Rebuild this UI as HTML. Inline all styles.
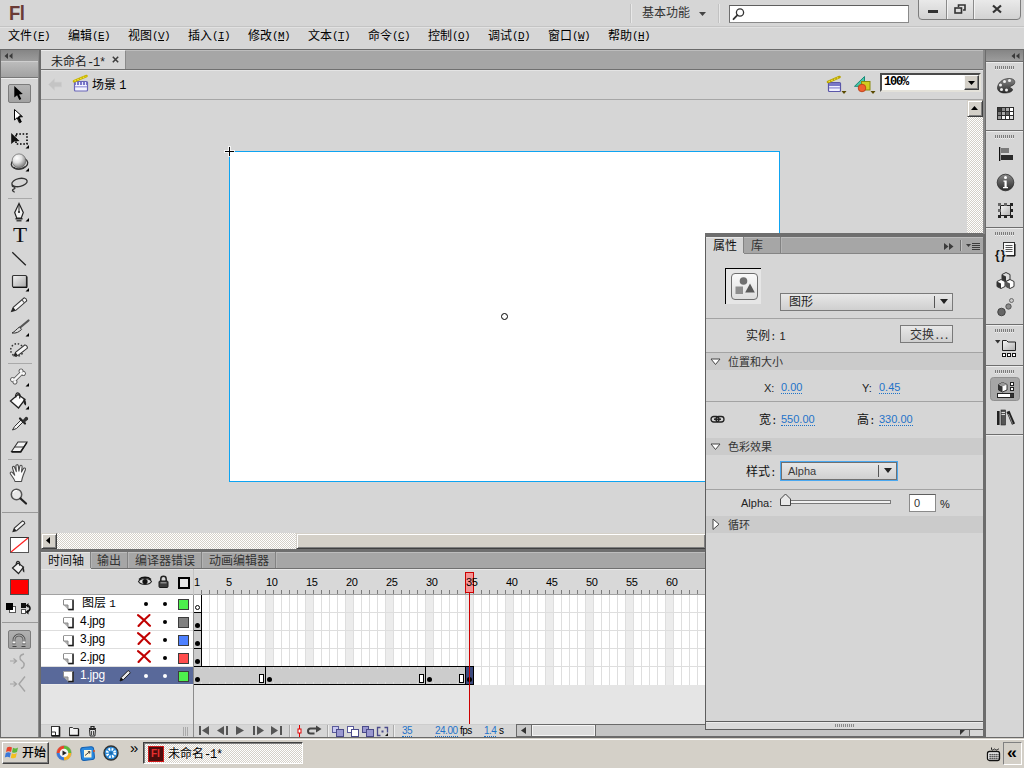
<!DOCTYPE html>
<html lang="zh-CN">
<head>
<meta charset="utf-8">
<title>未命名-1*</title>
<style>
html,body{margin:0;padding:0;}
body{width:1024px;height:768px;overflow:hidden;position:relative;background:#d6d6d6;
 font-family:"Liberation Sans","Noto Sans CJK SC",sans-serif;font-size:12px;color:#000;line-height:14px;}
.a{position:absolute;}
.t{position:absolute;white-space:nowrap;line-height:14px;height:14px;}
.t i,.mi i{font-style:normal;font-family:"Liberation Mono","Noto Sans Mono CJK SC",monospace;letter-spacing:-0.6px;font-size:11px;}
.u{text-decoration:underline;}
.mi i{position:relative;top:-1px;}
svg{position:absolute;overflow:visible;}
.mi{position:absolute;top:29px;height:14px;line-height:14px;white-space:nowrap;}
.tabbar{background:#a6a6a6;border-top:1px solid #bdbdbd;box-sizing:border-box;}
.tah{font-family:"Liberation Sans","DejaVu Sans",sans-serif;font-size:11px;}
.tl{font-family:"Liberation Sans","DejaVu Sans",sans-serif;font-size:10px;letter-spacing:-0.500px;}
.blue{color:#1f73c9;border-bottom:1px dotted #1f73c9;line-height:12px;height:12px;}
.sec{position:absolute;left:706px;width:277px;height:17px;background:#cbcbcb;}
.hline{position:absolute;left:706px;width:277px;height:1px;background:#a3a3a3;}
.btn{position:absolute;box-sizing:border-box;border:1px solid #7a7a7a;background:linear-gradient(#e8e8e8,#cfcfcf);}
</style>
</head>
<body>

<!-- top -->
<div class="a" style="left:0;top:0;width:1024px;height:26px;background:#d6d6d6"></div>
<div class="a" style="left:0;top:26px;width:1024px;height:1px;background:#c4c4c4"></div>
<div class="a" style="left:0;top:27px;width:1024px;height:1px;background:#e2e2e2;z-index:1"></div>
<div class="a" style="left:0;top:27px;width:1024px;height:22px;background:#d6d6d6"></div>
<div class="t" style="left:9px;top:1px;font-family:'Liberation Sans',sans-serif;font-weight:bold;font-size:21px;line-height:24px;height:24px;color:#6a3a36;letter-spacing:-0.5px;transform:scaleX(.88);transform-origin:0 0">Fl</div>
<div class="mi" style="left:8px">文件<i>(<span class="u">F</span>)</i></div>
<div class="mi" style="left:68px">编辑<i>(<span class="u">E</span>)</i></div>
<div class="mi" style="left:128px">视图<i>(<span class="u">V</span>)</i></div>
<div class="mi" style="left:188px">插入<i>(<span class="u">I</span>)</i></div>
<div class="mi" style="left:248px">修改<i>(<span class="u">M</span>)</i></div>
<div class="mi" style="left:308px">文本<i>(<span class="u">T</span>)</i></div>
<div class="mi" style="left:368px">命令<i>(<span class="u">C</span>)</i></div>
<div class="mi" style="left:428px">控制<i>(<span class="u">O</span>)</i></div>
<div class="mi" style="left:488px">调试<i>(<span class="u">D</span>)</i></div>
<div class="mi" style="left:548px">窗口<i>(<span class="u">W</span>)</i></div>
<div class="mi" style="left:608px">帮助<i>(<span class="u">H</span>)</i></div>
<!-- workspace switcher -->
<div class="a" style="left:630px;top:4px;width:1px;height:19px;background:#c2c2c2"></div>
<div class="a" style="left:631px;top:4px;width:1px;height:19px;background:#e8e8e8"></div>
<div class="t" style="left:642px;top:6px;color:#333">基本功能</div>
<svg style="left:699px;top:12px" width="7" height="4"><path d="M0 0h7l-3.5 4z" fill="#444"/></svg>
<div class="a" style="left:718px;top:4px;width:1px;height:19px;background:#c2c2c2"></div>
<div class="a" style="left:719px;top:4px;width:1px;height:19px;background:#e8e8e8"></div>
<!-- search -->
<div class="a" style="left:729px;top:5px;width:180px;height:18px;box-sizing:border-box;background:#fff;border:1px solid #8a8a8a;border-top-color:#5e5e5e;border-left-color:#6e6e6e"></div>
<svg style="left:732px;top:7px" width="14" height="14" viewBox="0 0 14 14"><circle cx="8" cy="5.5" r="3.6" fill="none" stroke="#333" stroke-width="1.3"/><path d="M5.4 8.2L1.5 12.2" stroke="#333" stroke-width="1.8" stroke-linecap="round"/></svg>
<!-- window buttons -->
<div class="a" style="left:918px;top:-3px;width:103px;height:23px;box-sizing:border-box;border:1px solid #7d7d7d;border-radius:0 0 4px 4px;background:linear-gradient(#ececec,#d2d2d2)"></div>
<div class="a" style="left:946px;top:0;width:1px;height:19px;background:#8a8a8a"></div>
<div class="a" style="left:947px;top:0;width:1px;height:19px;background:#f2f2f2"></div>
<div class="a" style="left:973px;top:0;width:1px;height:19px;background:#8a8a8a"></div>
<div class="a" style="left:974px;top:0;width:1px;height:19px;background:#f2f2f2"></div>
<div class="a" style="left:928px;top:10px;width:10px;height:3px;background:#333"></div>
<svg style="left:954px;top:4px" width="12" height="10" viewBox="0 0 12 10"><path d="M4.5 3V1h6.5v5H9" fill="none" stroke="#333" stroke-width="1.6"/><rect x="1" y="4" width="6.5" height="5" fill="none" stroke="#333" stroke-width="1.6"/></svg>
<svg style="left:992px;top:5px" width="10" height="8" viewBox="0 0 10 8"><path d="M1 0.5L9 7.5M9 0.5L1 7.5" stroke="#333" stroke-width="2.2"/></svg>

<!-- doc -->
<!-- dark line under menubar -->
<div class="a" style="left:0;top:49px;width:1024px;height:1px;background:#6a6a6a"></div>
<!-- document tab bar -->
<div class="a tabbar" style="left:41px;top:50px;width:942px;height:19px"></div>
<div class="a" style="left:41px;top:69px;width:942px;height:1px;background:#707070"></div>
<div class="a" style="left:41px;top:50px;width:85px;height:19px;background:#d6d6d6;border-top:1px solid #ececec;box-sizing:border-box;border-right:1px solid #8a8a8a"></div>
<div class="t" style="left:51px;top:55px;color:#222">未命名<i style="font-size:12px;letter-spacing:-1.200px">-1*</i></div>
<svg style="left:112px;top:56px" width="7" height="7" viewBox="0 0 7 7"><path d="M0.8 0.8L6.2 6.2M6.2 0.8L0.8 6.2" stroke="#3c3c3c" stroke-width="1.5"/></svg>
<!-- edit bar -->
<div class="a" style="left:41px;top:70px;width:942px;height:29px;background:#d6d6d6;border-top:1px solid #e4e4e4;box-sizing:border-box"></div>
<div class="a" style="left:41px;top:99px;width:942px;height:1px;background:#a6a6a6"></div>
<svg style="left:48px;top:78px" width="14" height="13" viewBox="0 0 14 13"><path d="M0.5 6.5L6.5 0.8V4.2H13.5V8.8H6.5V12.2z" fill="#c4c4c4" stroke="#cdcdcd" stroke-width=".6"/></svg>
<!-- scene clapper -->
<svg style="left:73px;top:75px" width="16" height="17" viewBox="0 0 16 17">
 <rect x="1.5" y="6.5" width="13" height="9.5" rx="1" fill="#f4f4ff" stroke="#6a66b8" stroke-width="1.2"/>
 <rect x="2" y="7" width="12" height="3" fill="#7a78c8"/>
 <path d="M3.5 7v3M6.5 7v3M9.5 7v3M12.5 7v3" stroke="#e8e8ff" stroke-width="1"/>
 <rect x="2" y="11" width="12" height="1.5" fill="#a8a6e0"/>
 <path d="M1 6.2L13.5 1" stroke="#c8b400" stroke-width="2.6" stroke-linecap="round"/>
 <path d="M1.5 6L13.2 1.2" stroke="#f0e040" stroke-width="1.2" stroke-dasharray="1.6 1.4"/>
</svg>
<div class="t" style="left:92px;top:78px">场景 <i style="font-size:12px">1</i></div>
<!-- edit scene / edit symbols icons -->
<svg style="left:827px;top:75px" width="20" height="20" viewBox="0 0 20 20">
 <rect x="1.5" y="7.5" width="12" height="9" rx="1" fill="#f0f0ff" stroke="#5a56a8" stroke-width="1.2"/>
 <rect x="2" y="8" width="11" height="3" fill="#7a78c8"/>
 <rect x="2" y="12.2" width="11" height="1.4" fill="#9a98d8"/>
 <path d="M1 7L12.5 2" stroke="#b8a400" stroke-width="2.6" stroke-linecap="round"/>
 <path d="M1.5 6.8L12.2 2.2" stroke="#f0e040" stroke-width="1.2" stroke-dasharray="1.6 1.4"/>
 <path d="M14.5 16h5l-2.5 3z" fill="#5a4a00"/>
</svg>
<svg style="left:853px;top:75px" width="24" height="20" viewBox="0 0 24 20">
 <path d="M1.500 11.300L11.500 1.500V11.300z" fill="#48c8a8" stroke="#1a8a7a" stroke-width="1"/>
 <rect x="8.500" y="6.500" width="8.500" height="8.500" fill="#d0cc20" stroke="#8a8a10" stroke-width="1"/>
 <circle cx="9" cy="13" r="3.800" fill="#f06030" stroke="#b83810" stroke-width=".800"/>
 <path d="M17.5 16h5l-2.5 3z" fill="#5a4a00"/>
</svg>
<!-- zoom combo -->
<div class="a" style="left:880px;top:73px;width:101px;height:19px;box-sizing:border-box;background:#fff;border:2px solid;border-color:#4a4a4a #e4e2da #e4e2da #4a4a4a;box-shadow:inset 0 0 0 0 #000"></div>
<div class="t" style="left:884px;top:75px;font-family:'Liberation Mono',monospace;font-weight:bold;font-size:12px;letter-spacing:-1.2px">100%</div>
<div class="a" style="left:964px;top:75px;width:15px;height:15px;box-sizing:border-box;background:#d4d0c8;border:1px solid;border-color:#f8f8f8 #404040 #404040 #f8f8f8;box-shadow:inset -1px -1px 0 #808080"></div>
<svg style="left:968px;top:81px" width="7" height="4"><path d="M0 0h7l-3.5 4z" fill="#000"/></svg>
<!-- stage -->
<div class="a" style="left:229px;top:151px;width:551px;height:331px;box-sizing:border-box;background:#fff;border:1px solid #0ea4f2"></div>
<div class="a" style="left:224px;top:150px;width:11px;height:3px;background:rgba(255,255,255,.75)"></div>
<div class="a" style="left:228px;top:146px;width:3px;height:11px;background:rgba(255,255,255,.75)"></div>
<div class="a" style="left:225px;top:151px;width:9px;height:1px;background:#000"></div>
<div class="a" style="left:229px;top:147px;width:1px;height:9px;background:#000"></div>
<svg style="left:500px;top:312px" width="9" height="9" viewBox="0 0 9 9"><circle cx="4.5" cy="4.5" r="3" fill="#fff" stroke="#000" stroke-width="1"/></svg>
<!-- vertical scrollbar -->
<div class="a" style="left:967px;top:100px;width:16px;height:134px;background-color:#d4d0c8;background-image:conic-gradient(#fff 25%,#d4d0c8 0 50%,#fff 0 75%,#d4d0c8 0);background-size:2px 2px"></div>
<div class="a" style="left:967px;top:100px;width:16px;height:17px;box-sizing:border-box;background:#d4d0c8;border:1px solid;border-color:#d4d0c8 #404040 #404040 #d4d0c8;box-shadow:inset 1px 1px 0 #fff,inset -1px -1px 0 #808080"></div>
<svg style="left:971px;top:106px" width="7" height="4"><path d="M0 4h7l-3.5-4z" fill="#000"/></svg>
<!-- horizontal scrollbar -->
<div class="a" style="left:41px;top:533px;width:665px;height:16px;background-color:#d4d0c8;background-image:conic-gradient(#fff 25%,#d4d0c8 0 50%,#fff 0 75%,#d4d0c8 0);background-size:2px 2px"></div>
<div class="a" style="left:41px;top:533px;width:16px;height:16px;box-sizing:border-box;background:#d4d0c8;border:1px solid;border-color:#d4d0c8 #404040 #404040 #d4d0c8;box-shadow:inset 1px 1px 0 #fff,inset -1px -1px 0 #808080"></div>
<svg style="left:46px;top:537px" width="4" height="7"><path d="M4 0v7l-4-3.500z" fill="#000"/></svg>
<div class="a" style="left:296px;top:533px;width:410px;height:16px;box-sizing:border-box;background:#d4d0c8;border:1px solid;border-color:#d4d0c8 #404040 #404040 #d4d0c8;box-shadow:inset 1px 1px 0 #fff,inset -1px -1px 0 #808080"></div>

<!-- timeline -->
<div class="a" style="left:41px;top:549px;width:665px;height:3px;background:#6e6e6e"></div>
<div class="a tabbar" style="left:41px;top:552px;width:665px;height:16px"></div>
<div class="a" style="left:41px;top:568px;width:665px;height:1px;background:#707070"></div>
<div class="a" style="left:41px;top:552px;width:50px;height:17px;background:#d6d6d6;border-top:1px solid #e8e8e8;box-sizing:border-box"></div>
<div class="a" style="left:90px;top:552px;width:1px;height:16px;background:#828282"></div>
<div class="a" style="left:91px;top:553px;width:1px;height:15px;background:#b4b4b4"></div>
<div class="a" style="left:127px;top:552px;width:1px;height:16px;background:#828282"></div>
<div class="a" style="left:128px;top:553px;width:1px;height:15px;background:#b4b4b4"></div>
<div class="a" style="left:201px;top:552px;width:1px;height:16px;background:#828282"></div>
<div class="a" style="left:202px;top:553px;width:1px;height:15px;background:#b4b4b4"></div>
<div class="a" style="left:275px;top:552px;width:1px;height:16px;background:#828282"></div>
<div class="a" style="left:276px;top:553px;width:1px;height:15px;background:#b4b4b4"></div>
<div class="t" style="left:48px;top:554px;color:#111">时间轴</div>
<div class="t" style="left:97px;top:554px;color:#333">输出</div>
<div class="t" style="left:135px;top:554px;color:#333">编译器错误</div>
<div class="t" style="left:209px;top:554px;color:#333">动画编辑器</div>
<div class="a" style="left:41px;top:569px;width:665px;height:25px;background:#d8d8d8;border-top:1px solid #e8e8e8;box-sizing:border-box"></div>
<div class="a" style="left:41px;top:594px;width:665px;height:1px;background:#a2a2a2"></div>
<div class="a" style="left:194px;top:590px;width:512px;height:4px;background:repeating-linear-gradient(90deg,transparent 0 7px,#7d7d7d 7px 8px)"></div>
<div class="a" style="left:465px;top:572px;width:9px;height:21px;box-sizing:border-box;border:1px solid #cc0000;background:rgba(255,120,120,.72)"></div>
<div class="t tah" style="left:194px;top:575px;color:#000;letter-spacing:-0.300px">1</div>
<div class="t tah" style="left:226px;top:575px;color:#000;letter-spacing:-0.300px">5</div>
<div class="t tah" style="left:266px;top:575px;color:#000;letter-spacing:-0.300px">10</div>
<div class="t tah" style="left:306px;top:575px;color:#000;letter-spacing:-0.300px">15</div>
<div class="t tah" style="left:346px;top:575px;color:#000;letter-spacing:-0.300px">20</div>
<div class="t tah" style="left:386px;top:575px;color:#000;letter-spacing:-0.300px">25</div>
<div class="t tah" style="left:426px;top:575px;color:#000;letter-spacing:-0.300px">30</div>
<div class="t tah" style="left:466px;top:575px;color:#000;letter-spacing:-0.300px">35</div>
<div class="t tah" style="left:506px;top:575px;color:#000;letter-spacing:-0.300px">40</div>
<div class="t tah" style="left:546px;top:575px;color:#000;letter-spacing:-0.300px">45</div>
<div class="t tah" style="left:586px;top:575px;color:#000;letter-spacing:-0.300px">50</div>
<div class="t tah" style="left:626px;top:575px;color:#000;letter-spacing:-0.300px">55</div>
<div class="t tah" style="left:666px;top:575px;color:#000;letter-spacing:-0.300px">60</div>
<div class="a" style="left:41px;top:595px;width:152px;height:72px;background:#fff"></div>
<div class="a" style="left:194px;top:595px;width:512px;height:90px;background:#fff"></div>
<div class="a" style="left:226px;top:595px;width:8px;height:90px;background:#ececec"></div>
<div class="a" style="left:266px;top:595px;width:8px;height:90px;background:#ececec"></div>
<div class="a" style="left:306px;top:595px;width:8px;height:90px;background:#ececec"></div>
<div class="a" style="left:346px;top:595px;width:8px;height:90px;background:#ececec"></div>
<div class="a" style="left:386px;top:595px;width:8px;height:90px;background:#ececec"></div>
<div class="a" style="left:426px;top:595px;width:8px;height:90px;background:#ececec"></div>
<div class="a" style="left:466px;top:595px;width:8px;height:90px;background:#ececec"></div>
<div class="a" style="left:506px;top:595px;width:8px;height:90px;background:#ececec"></div>
<div class="a" style="left:546px;top:595px;width:8px;height:90px;background:#ececec"></div>
<div class="a" style="left:586px;top:595px;width:8px;height:90px;background:#ececec"></div>
<div class="a" style="left:626px;top:595px;width:8px;height:90px;background:#ececec"></div>
<div class="a" style="left:666px;top:595px;width:8px;height:90px;background:#ececec"></div>
<div class="a" style="left:194px;top:595px;width:512px;height:90px;background:repeating-linear-gradient(90deg,transparent 0 7px,#dedede 7px 8px)"></div>
<div class="a" style="left:41px;top:612px;width:665px;height:1px;background:#dedede"></div>
<div class="a" style="left:41px;top:630px;width:665px;height:1px;background:#dedede"></div>
<div class="a" style="left:41px;top:648px;width:665px;height:1px;background:#dedede"></div>
<div class="a" style="left:41px;top:666px;width:665px;height:1px;background:#dedede"></div>
<div class="a" style="left:41px;top:685px;width:665px;height:39px;background:#e5e5e5"></div>
<div class="a" style="left:41px;top:684px;width:152px;height:1px;background:#ececec"></div>
<div class="a" style="left:41px;top:724px;width:665px;height:13px;background:#d6d6d6;border-top:1px solid #cdcdcd;box-sizing:border-box"></div>
<div class="a" style="left:193px;top:569px;width:1px;height:26px;background:#c4c4c4"></div>
<div class="a" style="left:193px;top:595px;width:1px;height:142px;background:#8c8c8c"></div>
<div class="a" style="left:41px;top:667px;width:152px;height:17px;background:#59699a"></div>
<svg style="left:63px;top:599px" width="12" height="12" viewBox="0 0 12 12"><path d="M1.500 2h9.500v9.500h-5v-4.500h-4.500z" fill="#9a9a9a" opacity=".6"/><path d="M0.500 0.500h9.500v10h-5v-4.500h-4.500z" fill="#fff"/><path d="M0.500 6l4.500 0 0 4.500z" fill="#b0b0b0"/><path d="M10 0.500v10h-5" fill="none" stroke="#1a1a1a" stroke-width="1.500"/><path d="M0.500 0.500h9" stroke="#a0a0a0" stroke-width="1"/><path d="M0.500 1v5h4.500v4.500" fill="none" stroke="#8a8a8a" stroke-width="1"/></svg>
<div class="t" style="left:82px;top:596px">图层 <i>1</i></div>
<div class="a" style="left:144px;top:602px;width:4px;height:4px;border-radius:50%;background:#000"></div>
<div class="a" style="left:163px;top:602px;width:4px;height:4px;border-radius:50%;background:#000"></div>
<div class="a" style="left:178px;top:599px;width:11px;height:11px;box-sizing:border-box;background:#4df04d;border:1px solid #3c3c3c"></div>
<svg style="left:63px;top:617px" width="12" height="12" viewBox="0 0 12 12"><path d="M1.500 2h9.500v9.500h-5v-4.500h-4.500z" fill="#9a9a9a" opacity=".6"/><path d="M0.500 0.500h9.500v10h-5v-4.500h-4.500z" fill="#fff"/><path d="M0.500 6l4.500 0 0 4.500z" fill="#b0b0b0"/><path d="M10 0.500v10h-5" fill="none" stroke="#1a1a1a" stroke-width="1.500"/><path d="M0.500 0.500h9" stroke="#a0a0a0" stroke-width="1"/><path d="M0.500 1v5h4.500v4.500" fill="none" stroke="#8a8a8a" stroke-width="1"/></svg>
<div class="t tah" style="left:80px;top:614px;color:#000;font-size:12px;letter-spacing:-0.200px">4.jpg</div>
<svg style="left:137px;top:614px" width="14" height="13" viewBox="0 0 14 13"><path d="M1 1.200C5 4 9 8 13 11.800M12.500 1C9 4 5 8 1.500 12" fill="none" stroke="#c00000" stroke-width="2.1" stroke-linecap="round"/></svg>
<div class="a" style="left:163px;top:620px;width:4px;height:4px;border-radius:50%;background:#000"></div>
<div class="a" style="left:178px;top:617px;width:11px;height:11px;box-sizing:border-box;background:#808080;border:1px solid #3c3c3c"></div>
<svg style="left:63px;top:635px" width="12" height="12" viewBox="0 0 12 12"><path d="M1.500 2h9.500v9.500h-5v-4.500h-4.500z" fill="#9a9a9a" opacity=".6"/><path d="M0.500 0.500h9.500v10h-5v-4.500h-4.500z" fill="#fff"/><path d="M0.500 6l4.500 0 0 4.500z" fill="#b0b0b0"/><path d="M10 0.500v10h-5" fill="none" stroke="#1a1a1a" stroke-width="1.500"/><path d="M0.500 0.500h9" stroke="#a0a0a0" stroke-width="1"/><path d="M0.500 1v5h4.500v4.500" fill="none" stroke="#8a8a8a" stroke-width="1"/></svg>
<div class="t tah" style="left:80px;top:632px;color:#000;font-size:12px;letter-spacing:-0.200px">3.jpg</div>
<svg style="left:137px;top:632px" width="14" height="13" viewBox="0 0 14 13"><path d="M1 1.200C5 4 9 8 13 11.800M12.500 1C9 4 5 8 1.500 12" fill="none" stroke="#c00000" stroke-width="2.1" stroke-linecap="round"/></svg>
<div class="a" style="left:163px;top:638px;width:4px;height:4px;border-radius:50%;background:#000"></div>
<div class="a" style="left:178px;top:635px;width:11px;height:11px;box-sizing:border-box;background:#4d80ff;border:1px solid #3c3c3c"></div>
<svg style="left:63px;top:653px" width="12" height="12" viewBox="0 0 12 12"><path d="M1.500 2h9.500v9.500h-5v-4.500h-4.500z" fill="#9a9a9a" opacity=".6"/><path d="M0.500 0.500h9.500v10h-5v-4.500h-4.500z" fill="#fff"/><path d="M0.500 6l4.500 0 0 4.500z" fill="#b0b0b0"/><path d="M10 0.500v10h-5" fill="none" stroke="#1a1a1a" stroke-width="1.500"/><path d="M0.500 0.500h9" stroke="#a0a0a0" stroke-width="1"/><path d="M0.500 1v5h4.500v4.500" fill="none" stroke="#8a8a8a" stroke-width="1"/></svg>
<div class="t tah" style="left:80px;top:650px;color:#000;font-size:12px;letter-spacing:-0.200px">2.jpg</div>
<svg style="left:137px;top:650px" width="14" height="13" viewBox="0 0 14 13"><path d="M1 1.200C5 4 9 8 13 11.800M12.500 1C9 4 5 8 1.500 12" fill="none" stroke="#c00000" stroke-width="2.1" stroke-linecap="round"/></svg>
<div class="a" style="left:163px;top:656px;width:4px;height:4px;border-radius:50%;background:#000"></div>
<div class="a" style="left:178px;top:653px;width:11px;height:11px;box-sizing:border-box;background:#ff4d4d;border:1px solid #3c3c3c"></div>
<svg style="left:63px;top:671px" width="12" height="12" viewBox="0 0 12 12"><path d="M1.500 2h9.500v9.500h-5v-4.500h-4.500z" fill="#9a9a9a" opacity=".6"/><path d="M0.500 0.500h9.500v10h-5v-4.500h-4.500z" fill="#fff"/><path d="M0.500 6l4.500 0 0 4.500z" fill="#b0b0b0"/><path d="M10 0.500v10h-5" fill="none" stroke="#1a1a1a" stroke-width="1.500"/><path d="M0.500 0.500h9" stroke="#a0a0a0" stroke-width="1"/><path d="M0.500 1v5h4.500v4.500" fill="none" stroke="#8a8a8a" stroke-width="1"/></svg>
<div class="t tah" style="left:80px;top:668px;color:#fff;font-size:12px;letter-spacing:-0.200px">1.jpg</div>
<div class="a" style="left:144px;top:674px;width:4px;height:4px;border-radius:50%;background:#fff"></div>
<div class="a" style="left:163px;top:674px;width:4px;height:4px;border-radius:50%;background:#fff"></div>
<div class="a" style="left:178px;top:671px;width:11px;height:11px;box-sizing:border-box;background:#4df04d;border:1px solid #3c3c3c"></div>
<svg style="left:119px;top:669px" width="12" height="13" viewBox="0 0 12 13"><path d="M1 12l1.200-3.500 7-7 2.200 2.200-7 7z" fill="#e8e8e8" stroke="#1a1a1a" stroke-width="1"/><path d="M1 12l1.200-3.500 2.200 2.200z" fill="#111"/></svg>
<svg style="left:138px;top:576px" width="14" height="11" viewBox="0 0 14 11"><path d="M0.500 5.500C3 1.500 11 1.500 13.500 5.500C11 9.500 3 9.500 0.500 5.500z" fill="#e0e0e0" stroke="#222" stroke-width="1.100"/><circle cx="7" cy="5.500" r="2.600" fill="#111"/><path d="M1 3.500C4 0.500 10 0.500 13 3.500" fill="none" stroke="#111" stroke-width="1.400"/></svg>
<svg style="left:158px;top:575px" width="11" height="13" viewBox="0 0 11 13"><path d="M2.800 6V4a2.700 2.700 0 0 1 5.400 0V6" fill="none" stroke="#222" stroke-width="1.500"/><rect x="1" y="6" width="9" height="6.500" rx="1" fill="#3c3c3c" stroke="#1a1a1a" stroke-width="1"/><rect x="2.500" y="7" width="6" height="1.500" fill="#8a8a8a"/></svg>
<div class="a" style="left:178px;top:577px;width:12px;height:12px;box-sizing:border-box;border:2px solid #000;background:#e6e6e6"></div>
<div class="a" style="left:194px;top:595px;width:7px;height:17px;background:#fff"></div>
<div class="a" style="left:195px;top:605px;width:5px;height:5px;box-sizing:border-box;border-radius:50%;border:1px solid #000;background:#fff"></div>
<div class="a" style="left:194px;top:612px;width:8px;height:1px;background:#000"></div>
<div class="a" style="left:194px;top:613px;width:7px;height:17px;background:#cccccc"></div>
<div class="a" style="left:195px;top:623px;width:5px;height:5px;border-radius:50%;background:#000"></div>
<div class="a" style="left:194px;top:630px;width:8px;height:1px;background:#000"></div>
<div class="a" style="left:194px;top:631px;width:7px;height:17px;background:#cccccc"></div>
<div class="a" style="left:195px;top:641px;width:5px;height:5px;border-radius:50%;background:#000"></div>
<div class="a" style="left:194px;top:648px;width:8px;height:1px;background:#000"></div>
<div class="a" style="left:194px;top:649px;width:7px;height:17px;background:#cccccc"></div>
<div class="a" style="left:195px;top:659px;width:5px;height:5px;border-radius:50%;background:#000"></div>
<div class="a" style="left:194px;top:666px;width:8px;height:1px;background:#000"></div>
<div class="a" style="left:201px;top:595px;width:1px;height:72px;background:#000"></div>
<div class="a" style="left:194px;top:666px;width:280px;height:19px;box-sizing:border-box;background:#cccccc;border-top:1px solid #000;border-bottom:1px solid #000"></div>
<div class="a" style="left:194px;top:667px;width:272px;height:2px;background:repeating-linear-gradient(90deg,transparent 0 7px,#dcdcdc 7px 8px)"></div>
<div class="a" style="left:194px;top:682px;width:272px;height:2px;background:repeating-linear-gradient(90deg,transparent 0 7px,#dcdcdc 7px 8px)"></div>
<div class="a" style="left:265px;top:666px;width:1px;height:19px;background:#000"></div>
<div class="a" style="left:259px;top:674px;width:5px;height:9px;box-sizing:border-box;border:1px solid #000;background:#fff"></div>
<div class="a" style="left:425px;top:666px;width:1px;height:19px;background:#000"></div>
<div class="a" style="left:419px;top:674px;width:5px;height:9px;box-sizing:border-box;border:1px solid #000;background:#fff"></div>
<div class="a" style="left:465px;top:666px;width:1px;height:19px;background:#000"></div>
<div class="a" style="left:459px;top:674px;width:5px;height:9px;box-sizing:border-box;border:1px solid #000;background:#fff"></div>
<div class="a" style="left:466px;top:666px;width:8px;height:19px;box-sizing:border-box;background:#3c4a7e;border:1px solid #000;border-left:none"></div>
<div class="a" style="left:195px;top:677px;width:5px;height:5px;border-radius:50%;background:#000"></div>
<div class="a" style="left:267px;top:677px;width:5px;height:5px;border-radius:50%;background:#000"></div>
<div class="a" style="left:427px;top:677px;width:5px;height:5px;border-radius:50%;background:#000"></div>
<div class="a" style="left:467px;top:677px;width:5px;height:5px;border-radius:50%;background:#000"></div>
<div class="a" style="left:469px;top:593px;width:1px;height:131px;background:#cc0000"></div>
<svg style="left:41px;top:724px" width="665" height="14" viewBox="41 724 665 14"><rect x="51.500" y="726.500" width="8" height="9" fill="#fff" stroke="#333" stroke-width="1"/><path d="M52 732h3.500v3.500" fill="none" stroke="#333" stroke-width="1"/><path d="M59.500 727v9h-8" stroke="#111" stroke-width="1.600" fill="none"/><path d="M69.500 727.500h3l1 1h5v7h-9z" fill="#f0f0f0" stroke="#333" stroke-width="1"/><path d="M78.500 729v6.500h-9" stroke="#111" stroke-width="1.300" fill="none"/><path d="M89 728.500h7M91 728v-1.500h3v1.500" stroke="#222" stroke-width="1.200" fill="none"/><path d="M89.500 729.500h6l-.6 6.500h-4.800z" fill="#ddd" stroke="#222" stroke-width="1"/><path d="M91.500 731v4M93.500 731v4" stroke="#222" stroke-width=".8"/><path d="M183.500 727v9M185.500 727v9M187.500 727v9" stroke="#aaa" stroke-width="1"/><rect x="199" y="726" width="2" height="9" fill="#555"/><path d="M209 726v9l-7-4.500z" fill="#555"/><path d="M224 726v9l-7-4.500z" fill="#555"/><rect x="226" y="726" width="2" height="9" fill="#555"/><path d="M236 726v9l8-4.500z" fill="#555"/><rect x="253" y="726" width="2" height="9" fill="#555"/><path d="M257 726v9l7-4.500z" fill="#555"/><path d="M271 726v9l7-4.500z" fill="#555"/><rect x="280" y="726" width="2" height="9" fill="#555"/><path d="M289.500 725v12" stroke="#aaa"/><path d="M290.500 725v12" stroke="#eee"/><path d="M299.500 725v12" stroke="#e00000" stroke-width="1"/><rect x="298" y="729" width="3" height="4" fill="#fff" stroke="#e00000" stroke-width="1"/><path d="M317 728.500h-6.500a2.500 2.500 0 0 0 0 5h4" fill="none" stroke="#444" stroke-width="2"/><path d="M316 725.500l5.500 3.500-5.500 3.500z" fill="#444"/><path d="M327.500 725v12" stroke="#aaa"/><path d="M328.500 725v12" stroke="#eee"/><rect x="332.500" y="726.500" width="6" height="6" fill="#c8c8f0" stroke="#5a5a9a"/><rect x="336.500" y="729.500" width="7" height="7" fill="#9a98d0" stroke="#4a4a8a"/><rect x="347.500" y="726.500" width="6" height="6" fill="#fff" stroke="#5a5a9a"/><rect x="351.500" y="729.500" width="7" height="7" fill="#fff" stroke="#4a4a8a"/><rect x="362.500" y="726.500" width="6" height="6" fill="#9a98d0" stroke="#4a4a8a"/><rect x="366.500" y="729.500" width="7" height="7" fill="#9a98d0" stroke="#4a4a8a"/><path d="M380.500 727.500h-3v8h3M384.500 727.500h3v5" fill="none" stroke="#4a4a8a" stroke-width="1.300"/><rect x="381.500" y="730.500" width="2" height="2" fill="#4a4a8a"/><path d="M388 733v3h-3z" fill="#111"/><path d="M393.500 725v12" stroke="#aaa"/><path d="M394.500 725v12" stroke="#eee"/></svg>
<div class="t tl blue" style="left:402px;top:726px;line-height:10px;height:10px">35</div>
<div class="t tl blue" style="left:435px;top:726px;line-height:10px;height:10px">24.00</div>
<div class="t tl" style="left:460px;top:726px;line-height:10px;height:10px">fps</div>
<div class="t tl blue" style="left:484px;top:726px;line-height:10px;height:10px">1.4</div>
<div class="t tl" style="left:499px;top:726px;line-height:10px;height:10px">s</div>
<div class="a" style="left:516px;top:724px;width:467px;height:13px;background:#c4c4c4;border:1px solid #6a6a6a;border-right:none;box-sizing:border-box"></div>
<div class="a" style="left:517px;top:725px;width:14px;height:11px;background:#c8c8c8"></div>
<div class="a" style="left:531px;top:725px;width:1px;height:11px;background:#6a6a6a"></div>
<svg style="left:521px;top:727px" width="5" height="7"><path d="M5 0v7l-5-3.500z" fill="#333"/></svg>
<div class="a" style="left:532px;top:725px;width:63px;height:11px;box-sizing:border-box;background:#dcdcdc;border:1px solid #f4f4f4"></div>
<div class="a" style="left:595px;top:725px;width:1px;height:11px;background:#6a6a6a"></div>
<div class="a" style="left:969px;top:730px;width:14px;height:6px;box-sizing:border-box;background:#d6d6d6;border-left:1px solid #6a6a6a"></div>
<svg style="left:960px;top:730px" width="6" height="5"><path d="M0 5L5 0H0z" fill="#333"/></svg>
<!-- props -->
<!-- properties panel frame -->
<div class="a" style="left:705px;top:233px;width:280px;height:497px;background:#5e5e5e"></div>
<div class="a" style="left:983px;top:233px;width:2px;height:505px;background:#5e5e5e"></div>
<div class="a" style="left:705px;top:233px;width:280px;height:4px;background:#6e6e6e"></div>
<div class="a" style="left:706px;top:237px;width:277px;height:484px;background:#d6d6d6"></div>
<div class="a tabbar" style="left:706px;top:237px;width:277px;height:16px"></div>
<div class="a" style="left:706px;top:253px;width:277px;height:1px;background:#858585"></div>
<div class="a" style="left:706px;top:237px;width:38px;height:17px;background:#d6d6d6;border-top:1px solid #e8e8e8;box-sizing:border-box"></div>
<div class="a" style="left:743px;top:237px;width:1px;height:16px;background:#828282"></div>
<div class="a" style="left:780px;top:237px;width:1px;height:16px;background:#828282"></div>
<div class="a" style="left:781px;top:238px;width:1px;height:15px;background:#b4b4b4"></div>
<div class="t" style="left:713px;top:239px;color:#111">属性</div>
<div class="t" style="left:751px;top:239px;color:#333">库</div>
<svg style="left:944px;top:240px" width="40" height="12" viewBox="944 240 40 12"><path d="M944 243v7l4.500-3.500zM949 243v7l4.500-3.500z" fill="#3c3c3c"/><path d="M960.500 240v11" stroke="#6e6e6e"/><path d="M961.500 240v11" stroke="#c0c0c0"/><path d="M966 244h5l-2.500 3z" fill="#3c3c3c"/><path d="M972 243.500h8M972 245.500h8M972 247.500h8M972 249.500h8" stroke="#3c3c3c" stroke-width="1"/></svg>
<!-- symbol icon -->
<div class="a" style="left:725px;top:268px;width:36px;height:36px;box-sizing:border-box;background:#e6e6e6;border-top:1px solid #000;border-left:1px solid #000"></div>
<div class="a" style="left:731px;top:273px;width:27px;height:27px;box-sizing:border-box;border:1.500px solid #6e6e6e;border-radius:4px;background:linear-gradient(#fafafa,#dedede)"></div>
<svg style="left:731px;top:273px" width="27" height="27" viewBox="0 0 27 27"><circle cx="12.500" cy="8" r="3.800" fill="#707070"/><rect x="4.500" y="13.500" width="7.500" height="7.500" fill="#8e8e8e"/><path d="M19 10.500l4.800 9h-9.600z" fill="#5a5a5a"/></svg>
<!-- type combo -->
<div class="btn" style="left:780px;top:293px;width:173px;height:18px"></div>
<div class="t" style="left:789px;top:295px;color:#222">图形</div>
<div class="a" style="left:934px;top:296px;width:1px;height:12px;background:#555"></div>
<svg style="left:940px;top:299px" width="8" height="5"><path d="M0 0h8l-4 5z" fill="#222"/></svg>
<div class="hline" style="top:318px"></div>
<div class="t" style="left:746px;top:329px;color:#222">实例<i>:</i> <span class="tah" style="font-size:11px">1</span></div>
<div class="btn" style="left:900px;top:325px;width:53px;height:18px"></div>
<div class="t" style="left:910px;top:328px;color:#333">交换<i style="letter-spacing:-2px">...</i></div>
<div class="hline" style="top:352px"></div>
<!-- position and size -->
<div class="sec" style="top:353px"></div>
<svg style="left:710px;top:358px" width="11" height="8" viewBox="0 0 11 8"><path d="M1 1h9l-4.500 5.500z" fill="#fff" stroke="#444" stroke-width="1"/></svg>
<div class="t" style="left:728px;top:355px;color:#333;font-size:11px">位置和大小</div>
<div class="t tah" style="left:764px;top:381px;color:#222">X:</div>
<div class="t tah blue" style="left:781px;top:381px">0.00</div>
<div class="t tah" style="left:862px;top:381px;color:#222">Y:</div>
<div class="t tah blue" style="left:879px;top:381px">0.45</div>
<div class="hline" style="top:401px"></div>
<svg style="left:710px;top:415px" width="15" height="9" viewBox="0 0 15 9"><rect x="1" y="1.500" width="8" height="5.500" rx="2.700" fill="none" stroke="#222" stroke-width="1.300"/><rect x="6" y="1.500" width="8" height="5.500" rx="2.700" fill="none" stroke="#222" stroke-width="1.300"/><path d="M4 4.200h7" stroke="#222" stroke-width="1.500"/></svg>
<div class="t" style="left:759px;top:413px;color:#111">宽<i>:</i></div>
<div class="t tah blue" style="left:781px;top:413px">550.00</div>
<div class="t" style="left:857px;top:413px;color:#111">高<i>:</i></div>
<div class="t tah blue" style="left:879px;top:413px">330.00</div>
<!-- color effect -->
<div class="sec" style="top:438px"></div>
<svg style="left:710px;top:443px" width="11" height="8" viewBox="0 0 11 8"><path d="M1 1h9l-4.500 5.500z" fill="#fff" stroke="#444" stroke-width="1"/></svg>
<div class="t" style="left:728px;top:440px;color:#333;font-size:11px">色彩效果</div>
<div class="t" style="left:746px;top:465px;color:#111">样式<i>:</i></div>
<div class="btn" style="left:780px;top:461px;width:118px;height:20px;border:1px solid #4aa8f0;box-shadow:inset 0 0 0 1px #707070"></div>
<div class="t tah" style="left:788px;top:464px;color:#3a3a3a">Alpha</div>
<div class="a" style="left:878px;top:465px;width:1px;height:12px;background:#555"></div>
<svg style="left:884px;top:468px" width="8" height="5"><path d="M0 0h8l-4 5z" fill="#222"/></svg>
<div class="hline" style="top:489px"></div>
<div class="t tah" style="left:741px;top:496px;color:#222">Alpha:</div>
<div class="a" style="left:786px;top:500px;width:105px;height:4px;box-sizing:border-box;border:1px solid #7a7a7a;background:#f0f0f0"></div>
<svg style="left:779px;top:493px" width="13" height="14" viewBox="0 0 13 14"><path d="M1.500 12.500v-6.500l5-5 5 5v6.500z" fill="#e8e8e8" stroke="#444" stroke-width="1"/></svg>
<div class="a" style="left:909px;top:494px;width:27px;height:18px;box-sizing:border-box;background:#fff;border:1px solid #8a8a8a;border-top-color:#5e5e5e"></div>
<div class="t tah" style="left:914px;top:496px;color:#333">0</div>
<div class="t tah" style="left:940px;top:497px;color:#222">%</div>
<!-- loop -->
<div class="sec" style="top:516px"></div>
<svg style="left:712px;top:518px" width="8" height="13" viewBox="0 0 8 13"><path d="M1 1v10.500l6-5.250z" fill="#fff" stroke="#444" stroke-width="1"/></svg>
<div class="t" style="left:728px;top:518px;color:#333;font-size:11px">循环</div>
<!-- bottom of panel -->
<div class="a" style="left:706px;top:722px;width:277px;height:7px;background:#dadada;border-top:1px solid #ececec;box-sizing:border-box"></div>
<div class="a" style="left:835px;top:724px;width:20px;height:3px;background:repeating-linear-gradient(90deg,#8a8a8a 0 1px,transparent 1px 2px)"></div>

<!-- tools -->
<!-- tools panel -->
<div class="a" style="left:0;top:50px;width:41px;height:688px;background:#6c6c6c"></div>
<div class="a" style="left:38px;top:50px;width:1px;height:688px;background:#8a8a8a"></div>
<div class="a" style="left:1px;top:50px;width:37px;height:11px;background:linear-gradient(#858585,#9c9c9c)"></div>
<div class="a" style="left:1px;top:61px;width:37px;height:17px;background:linear-gradient(#bcbcbc,#a0a0a0);border-top:1px solid #cfcfcf;box-sizing:border-box"></div>
<div class="a" style="left:1px;top:77px;width:37px;height:1px;background:#787878"></div>
<div class="a" style="left:1px;top:78px;width:37px;height:659px;background:#d6d6d6;border-top:1px solid #ececec;box-sizing:border-box"></div>
<svg style="left:4px;top:53px" width="9" height="6" viewBox="0 0 9 6"><path d="M4 0v6l-3.500-3zM8.500 0v6l-3.500-3z" fill="#3a3a3a"/></svg>
<!-- separators -->
<div class="a" style="left:8px;top:198px;width:24px;height:1px;background:#a9a9a9"></div>
<div class="a" style="left:8px;top:363px;width:24px;height:1px;background:#a9a9a9"></div>
<div class="a" style="left:8px;top:459px;width:24px;height:1px;background:#a9a9a9"></div>
<div class="a" style="left:2px;top:512px;width:36px;height:1px;background:#9a9a9a"></div>
<div class="a" style="left:2px;top:622px;width:36px;height:1px;background:#9a9a9a"></div>
<!-- selected tool buttons -->
<div class="a" style="left:8px;top:84px;width:23px;height:19px;box-sizing:border-box;border:1px solid #7c7c7c;border-radius:2px;background:linear-gradient(#b4b4b4,#a2a2a2)"></div>
<div class="a" style="left:8px;top:630px;width:23px;height:19px;box-sizing:border-box;border:1px solid #7c7c7c;border-radius:2px;background:linear-gradient(#b0b0b0,#a0a0a0)"></div>
<svg style="left:0;top:78px" width="40" height="660" viewBox="0 78 40 660">
<defs>
 <radialGradient id="gsph" cx=".35" cy=".3" r=".75"><stop offset="0" stop-color="#fff"/><stop offset=".45" stop-color="#e0e0e0"/><stop offset="1" stop-color="#777"/></radialGradient>
 <linearGradient id="grect" x1="0" y1="0" x2="1" y2="1"><stop offset="0" stop-color="#f4f4f4"/><stop offset="1" stop-color="#a8a8a8"/></linearGradient>
</defs>
<!-- selection arrow -->
<path d="M14.300 86v11.500l2.800-2.300 2.200 4.800 2-.9-2.200-4.700 3.700-.3z" fill="#000"/>
<!-- subselection arrow -->
<path d="M14.500 109.500v10.500l2.600-2.200 2.300 5 1.900-.9-2.300-4.900 3.500-.3z" fill="#fff" stroke="#000" stroke-width="1" stroke-linejoin="miter"/>
<path d="M17.300 117.600l2.300 5 1.700-.8-2.300-4.900 3-.3-1.800-1.700z" fill="#000"/>
<!-- free transform -->
<rect x="16" y="134" width="11" height="10" fill="none" stroke="#000" stroke-width="1.600" stroke-dasharray="1.600 1.700"/>
<path d="M11.200 133v11l3-2.600 5.300-.4z" fill="#111"/>
<path d="M29 145v3.500h-3.500z" fill="#000"/>
<!-- 3d rotation -->
<ellipse cx="19.500" cy="163.500" rx="8.300" ry="5.500" fill="none" stroke="#333" stroke-width="1.300" transform="rotate(-8 19.500 163.500)"/>
<circle cx="19" cy="160.800" r="6.900" fill="url(#gsph)" stroke="#666" stroke-width=".700"/>
<path d="M13.500 167.300c2.500 2.600 8.500 2.600 11.500-.5" fill="none" stroke="#333" stroke-width="1.300"/>
<path d="M29 168v3.500h-3.500z" fill="#000"/>
<!-- lasso -->
<ellipse cx="19.500" cy="182.500" rx="7.800" ry="4" fill="none" stroke="#333" stroke-width="1.300" transform="rotate(-12 19.500 182.500)"/>
<path d="M12.500 185c-1.500 1.500 2.500 1.500 2.500 3s-3 1-2.500 2.500 2 .5 1.500 2" fill="none" stroke="#333" stroke-width="1.300"/>
<!-- pen -->
<path d="M19 203.500l-4.300 9 2 5.500h4.600l2-5.500z" fill="#f2f2f2" stroke="#222" stroke-width="1.200"/>
<path d="M19 204v7.500" stroke="#222" stroke-width="1"/><circle cx="19" cy="212" r="1.100" fill="#222"/>
<rect x="15.500" y="218" width="7" height="1.500" fill="#222"/><rect x="16.500" y="220" width="5" height="1.500" fill="#444"/>
<path d="M29 218v3.500h-3.500z" fill="#000"/>
<!-- line -->
<path d="M12.300 252.300l13.500 13" stroke="#222" stroke-width="1.300"/>
<!-- rectangle -->
<rect x="12.500" y="275.500" width="14" height="11.500" rx="1" fill="url(#grect)" stroke="#333" stroke-width="1.200"/>
<path d="M13 287.500h14v-11" fill="none" stroke="#111" stroke-width="1"/>
<path d="M29 288v3.500h-3.500z" fill="#000"/>
<!-- pencil -->
<g transform="rotate(-41 11.500 311.500)"><path d="M11.500 311.500l4-2h14.500q1.500 2 0 4h-14.500z" fill="#f6f6f6" stroke="#333" stroke-width="1"/><path d="M11.500 311.500l4-2v4z" fill="#222"/><path d="M27 309.500v4" stroke="#555" stroke-width="1"/></g>
<!-- brush -->
<path d="M28.500 320.500l-9 7.500" stroke="#555" stroke-width="2.200" stroke-linecap="round"/>
<path d="M19.500 327l2 2.300c-2 2.700-5.500 4.300-9.500 3.700 2.500-1 5-4.500 7.500-6z" fill="#d8d8d8" stroke="#333" stroke-width="1"/>
<path d="M29 333v3.500h-3.500z" fill="#000"/>
<!-- deco -->
<circle cx="17" cy="350" r="6.300" fill="none" stroke="#333" stroke-width="1.500" stroke-dasharray="1.500 1.800"/>
<g transform="rotate(-38 14 356)"><path d="M14 356l3.500-2h12q1.500 2 0 4h-12z" fill="#f6f6f6" stroke="#333" stroke-width="1"/><path d="M14 356l3.500-2v4z" fill="#222"/></g>
<!-- bone -->
<g transform="rotate(-45 18 376.500)">
<path d="M12.500 376.500h11" stroke="#5a5a5a" stroke-width="4.200"/><circle cx="12" cy="374.800" r="2.500" fill="#5a5a5a"/><circle cx="12" cy="378.200" r="2.500" fill="#5a5a5a"/><circle cx="24" cy="374.800" r="2.500" fill="#5a5a5a"/><circle cx="24" cy="378.200" r="2.500" fill="#5a5a5a"/>
<path d="M12.500 376.500h11" stroke="#f6f6f6" stroke-width="2.400"/><circle cx="12" cy="374.800" r="1.600" fill="#f6f6f6"/><circle cx="12" cy="378.200" r="1.600" fill="#f6f6f6"/><circle cx="24" cy="374.800" r="1.600" fill="#f6f6f6"/><circle cx="24" cy="378.200" r="1.600" fill="#f6f6f6"/>
</g>
<path d="M29 383v3.500h-3.500z" fill="#000"/>
<!-- paint bucket -->
<path d="M10.500 401l7.500-6.500 7 5-6.500 8.500z" fill="#fcfcfc" stroke="#222" stroke-width="1.300"/>
<path d="M16 397.500c-1.500-3 1-5.500 3-4s1 3.500.5 5" fill="none" stroke="#222" stroke-width="1.200"/>
<path d="M23.500 398.500c2 1 3 3.500 2.500 7-1.500-.5-2.500-2-2.500-4z" fill="#222"/>
<path d="M29 406v3.500h-3.500z" fill="#000"/>
<!-- eyedropper -->
<path d="M12.500 430l2-3.500 6.500-6.500 2 2-6.500 6.500z" fill="#f0f0f0" stroke="#333" stroke-width="1"/>
<path d="M20 418.500l5 5" stroke="#222" stroke-width="2.200" stroke-linecap="round"/>
<path d="M22 421l3.500-4a1.900 1.900 0 0 1 2.500 2.500l-4 3.500z" fill="#333"/>
<!-- eraser -->
<path d="M11.500 451.500l6.500-9.500h9l-6.500 9.500z" fill="#f4f4f4" stroke="#333" stroke-width="1.100"/>
<path d="M14.500 447h9" stroke="#333" stroke-width="1"/><path d="M11.500 452h9.300l6.200-9.500" fill="none" stroke="#111" stroke-width="1.300"/>
<!-- hand -->
<path d="M15 481.500c-.5-2.500-3-5-4.500-7.500-1-1.800 1-2.800 2.300-1.200l1.900 2.400-2.200-7.200c-.5-1.600 1.500-2.300 2.100-.7l1.700 4.300-.4-5.600c-.1-1.700 2.200-1.800 2.400-.1l.6 5.300.9-4.900c.3-1.600 2.500-1.300 2.300.4l-.6 5.300 1.800-3.300c.8-1.400 2.700-.5 2.100 1l-1.800 4.500c-.8 2.200-1.600 4.300-2.100 7.300z" fill="#fafafa" stroke="#4a4a4a" stroke-width="1.100" stroke-linejoin="round"/>
<!-- zoom -->
<circle cx="16.500" cy="494.500" r="5.200" fill="#e8e8e8" stroke="#555" stroke-width="1.500"/>
<path d="M13 493a4 4 0 0 1 4-2.500" fill="none" stroke="#fff" stroke-width="1.200"/>
<path d="M20.500 498.500l5.500 5" stroke="#222" stroke-width="2.200" stroke-linecap="round"/>
<!-- stroke pencil -->
<g transform="rotate(-41 13 531.500)"><path d="M13 531.500l3.200-1.700h11q1.300 1.700 0 3.400h-11z" fill="#f6f6f6" stroke="#333" stroke-width="1"/><path d="M13 531.500l3.200-1.700v3.400z" fill="#222"/></g>
<!-- stroke swatch -->
<rect x="10.500" y="537.500" width="18" height="15" fill="#fff" stroke="#555" stroke-width="1"/>
<path d="M10.500 537.500h18" stroke="#333" stroke-width="1"/>
<path d="M11 552L28 538" stroke="#ff2020" stroke-width="1.200"/>
<!-- fill bucket -->
<path d="M12.500 568l5.500-5 5.500 4-5 6.500z" fill="#f2f2f2" stroke="#222" stroke-width="1.200"/>
<path d="M16.500 565c-1-2.500 1-4.500 2.500-3.300s.8 2.800.4 4" fill="none" stroke="#222" stroke-width="1.100"/>
<path d="M22.500 566.500c1.500 1 2 3 1.800 6-1.200-.5-1.800-1.800-1.800-3.500z" fill="#222"/>
<!-- fill swatch -->
<rect x="10.500" y="579.500" width="18" height="15" fill="#ff0000" stroke="#4a4a4a" stroke-width="1"/>
<!-- black/white + swap -->
<rect x="9.500" y="606.500" width="6" height="6" fill="#fff" stroke="#555" stroke-width="1"/>
<rect x="6" y="603" width="7" height="7" fill="#000"/>
<rect x="21" y="603" width="5" height="5" fill="#111"/><rect x="21.500" y="609.500" width="4" height="4" fill="#fff" stroke="#555" stroke-width="1"/>
<path d="M27 605.500c3.500 0 4.500 5 0 6.500" fill="none" stroke="#111" stroke-width="1.500"/><path d="M28.500 603l-3 2.500 3 2.500zM28.500 609.500l-3 2.500 3 2.500z" fill="#111"/>
<!-- magnet -->
<path d="M14 644.500v-4.500a5 5 0 0 1 10 0v4.500" fill="none" stroke="#555" stroke-width="2.800"/>
<path d="M14 644.500v-4.500a5 5 0 0 1 10 0v4.500" fill="none" stroke="#bdbdbd" stroke-width="1"/>
<rect x="12.600" y="641.500" width="2.800" height="1.600" fill="#f4f4f4"/><rect x="22.600" y="641.500" width="2.800" height="1.600" fill="#f4f4f4"/>
<path d="M12.500 646.500h4M21.500 646.500h4" stroke="#444" stroke-width="1.200"/>
<!-- smooth (disabled) -->
<path d="M10 661h6M13.500 658.500l3 2.500-3 2.500" fill="none" stroke="#a4a4a4" stroke-width="1.200"/>
<path d="M24 654c-5 1-5 5-2 7s3 6-1 7.500" fill="none" stroke="#a4a4a4" stroke-width="1.400"/>
<!-- straighten (disabled) -->
<path d="M10 684h6M13.500 681.500l3 2.500-3 2.500" fill="none" stroke="#a4a4a4" stroke-width="1.200"/>
<path d="M25 676.500l-6 7.500 6 7.500" fill="none" stroke="#a4a4a4" stroke-width="1.400"/>
</svg>
<div class="t" style="left:12.500px;top:224px;font-family:'Liberation Serif',serif;font-size:22px;line-height:22px;height:22px;color:#111;transform:scaleX(1.05);transform-origin:0 0">T</div>

<!-- right -->
<!-- right icon panel -->
<div class="a" style="left:983px;top:50px;width:41px;height:688px;background:#6c6c6c"></div>
<div class="a" style="left:983px;top:50px;width:2px;height:184px;background:#8a8a8a"></div>
<div class="a" style="left:986px;top:50px;width:37px;height:11px;background:linear-gradient(#858585,#9c9c9c)"></div>
<div class="a" style="left:986px;top:61px;width:37px;height:1px;background:#6e6e6e"></div>
<div class="a" style="left:986px;top:62px;width:37px;height:675px;background:#d6d6d6;border-top:1px solid #ececec;box-sizing:border-box"></div>
<svg style="left:1011px;top:53px" width="9" height="6" viewBox="0 0 9 6"><path d="M4 0v6l-3.500-3zM8.500 0v6l-3.500-3z" fill="#3a3a3a"/></svg>
<svg style="left:986px;top:62px" width="37" height="676" viewBox="986 62 37 676">
<defs>
 <linearGradient id="gdk" x1="0" y1="0" x2="0" y2="1"><stop offset="0" stop-color="#8a8a8a"/><stop offset="1" stop-color="#2a2a2a"/></linearGradient>
 <linearGradient id="glt" x1="0" y1="0" x2="1" y2="1"><stop offset="0" stop-color="#f8f8f8"/><stop offset="1" stop-color="#b0b0b0"/></linearGradient>
 <g id="grip"><path d="M995.500 0v3M997.500 0v3M999.500 0v3M1001.500 0v3M1003.500 0v3M1005.500 0v3M1007.500 0v3M1009.500 0v3M1011.500 0v3M1013.500 0v3" stroke="#7c7c7c" stroke-width="1"/><path d="M995 3.500h19" stroke="#eee" stroke-width="1" stroke-dasharray="1 1"/></g>
</defs>
<!-- group separators -->
<g stroke-width="1"><path d="M986 130.500h37M986 227.500h37M986 324.500h37M986 365.500h37M986 434.500h37" stroke="#6e6e6e"/><path d="M986 131.500h37M986 228.500h37M986 325.500h37M986 366.500h37M986 435.500h37" stroke="#ececec"/></g>
<use href="#grip" y="66"/><use href="#grip" y="135"/><use href="#grip" y="232"/><use href="#grip" y="329"/><use href="#grip" y="370"/>
<!-- palette -->
<path d="M997.500 88c0-5 5-9.500 11.500-9.500 5 0 6.500 2.500 5.500 5-1 2.500-4 2-4.500 3.500s3 1 2.500 3c-.5 2-4 3-8 3-4 0-7-2-7-5z" fill="url(#gdk)" stroke="#222" stroke-width=".6"/>
<circle cx="1004.500" cy="81.500" r="1.500" fill="#eee"/><circle cx="1009.500" cy="80.500" r="1.500" fill="#eee"/><circle cx="1000.500" cy="85" r="1.500" fill="#eee"/><circle cx="1001.500" cy="89.500" r="1.500" fill="#eee"/><circle cx="1006.500" cy="90" r="1.500" fill="#eee"/>
<!-- swatches -->
<rect x="997" y="107" width="17" height="13" fill="#2c2c2c"/>
<g>
<rect x="998" y="108" width="3" height="3" fill="#3a3a3a"/><rect x="1002" y="108" width="3" height="3" fill="#8a8a8a"/><rect x="1006" y="108" width="3" height="3" fill="#aaa"/><rect x="1010" y="108" width="3" height="3" fill="#fff"/>
<rect x="998" y="112" width="3" height="3" fill="#777"/><rect x="1002" y="112" width="3" height="3" fill="#aaa"/><rect x="1006" y="112" width="3" height="3" fill="#666"/><rect x="1010" y="112" width="3" height="3" fill="#fff"/>
<rect x="998" y="116" width="3" height="3" fill="#999"/><rect x="1002" y="116" width="3" height="3" fill="#f0f0f0"/><rect x="1006" y="116" width="3" height="3" fill="#fff"/><rect x="1010" y="116" width="3" height="3" fill="#ddd"/>
</g>
<!-- align -->
<rect x="999" y="147" width="1.300" height="14" fill="#111"/><rect x="1001" y="148" width="8" height="5" fill="#7a7a7a"/><rect x="1001" y="155" width="12" height="5" fill="#2a2a2a"/>
<!-- info -->
<circle cx="1005.500" cy="182.500" r="8.300" fill="url(#gdk)" stroke="#2a2a2a" stroke-width=".8"/>
<circle cx="1005.500" cy="177.500" r="1.500" fill="#fff"/><path d="M1003.500 180.500h3.200v6.500h1.300v1.300h-5v-1.300h1.500v-5.200h-1z" fill="#fff"/>
<!-- transform -->
<rect x="1000.500" y="205.500" width="10" height="10" fill="url(#glt)" stroke="#222" stroke-width="1"/>
<g fill="#222"><rect x="998" y="203" width="3" height="3" fill="#666"/><rect x="1004" y="203" width="3" height="3" fill="#666"/><rect x="1010" y="203" width="3" height="3"/><rect x="998" y="209" width="3" height="3" fill="#666"/><rect x="1010" y="209" width="3" height="3"/><rect x="998" y="215" width="3" height="3"/><rect x="1004" y="215" width="3" height="3"/><rect x="1010" y="215" width="3" height="3"/></g>
<!-- actions (script) -->
<rect x="1003.500" y="242.500" width="11" height="13" fill="#fafafa" stroke="#333" stroke-width="1"/>
<path d="M1005.500 245.500h7M1005.500 247.500h7M1005.500 249.500h7M1005.500 251.500h7" stroke="#555" stroke-width="1"/>
<path d="M1015 244v12h-10" fill="none" stroke="#111" stroke-width="1"/>
<text x="995" y="258.500" font-family="Liberation Sans,sans-serif" font-weight="bold" font-size="12" letter-spacing="1" fill="#111" stroke="#d6d6d6" stroke-width="2" paint-order="stroke">{}</text>
<!-- behaviors cubes -->
<g stroke="#222" stroke-width=".9"><path d="M1002 274.500l4-2 4 2v5l-4 2-4-2z" fill="#ddd"/><path d="M997 281.500l4-2 4 2v5l-4 2-4-2z" fill="#fff"/><path d="M1006 281.500l4-2 4 2v5l-4 2-4-2z" fill="#fff"/></g>
<path d="M997 281.500l4 2v5l-4-2zM1002 274.500l4 2v5l-4-2z" fill="#333"/><path d="M1006 281.500l4 2v5l-4-2z" fill="#555"/>
<!-- debug dots -->
<circle cx="1001.500" cy="312" r="3.800" fill="#666" stroke="#333" stroke-width=".8"/><circle cx="1008.500" cy="306.500" r="2.700" fill="#8a8a8a" stroke="#444" stroke-width=".8"/><circle cx="1011.500" cy="300.500" r="2" fill="#c8c8c8" stroke="#555" stroke-width=".8"/>
<!-- presets folder -->
<path d="M995 340h5.500l-2.750 3.500z" fill="#333"/>
<path d="M1002.500 340.500h4l1.500 1.500h7.500v8.500h-13z" fill="url(#glt)" stroke="#222" stroke-width="1"/>
<g fill="#fff" stroke="#111" stroke-width="1"><rect x="1002.500" y="353.500" width="3" height="3"/><rect x="1007.500" y="353.500" width="3" height="3"/><rect x="1012.500" y="353.500" width="3" height="3"/></g>
<!-- selected: properties -->
<rect x="990.500" y="377.500" width="29" height="23" rx="3" fill="#a6a6a6" stroke="#909090" stroke-width="1"/>
<path d="M998.500 384.500l4-2 4.500 2v5.500l-4.500 2-4-2z" fill="#fff" stroke="#222" stroke-width=".9"/><path d="M998.500 384.500l4 2v5.500l-4-2z" fill="#333"/><path d="M998.500 384.500l4-2 4.500 2-4.500 2z" fill="#999"/>
<g fill="#fff" stroke="#222" stroke-width="1"><rect x="1010.500" y="382.500" width="3" height="3"/><rect x="1010.500" y="387.500" width="3" height="3"/><rect x="997.500" y="393.500" width="16" height="4"/></g>
<rect x="1010" y="394" width="3.500" height="3" fill="#333"/>
<!-- library books -->
<rect x="997" y="411" width="2.600" height="14" fill="#222"/><rect x="1001" y="410" width="4.500" height="15" fill="#555" stroke="#222" stroke-width=".6"/><path d="M1001.500 412.500h3.500M1001.500 414.500h3.500" stroke="#ddd" stroke-width="1"/>
<path d="M1006.500 412l3-1.200 5.500 12.700-3 1.300z" fill="#222"/><path d="M1008.500 414l4 9.500" stroke="#aaa" stroke-width=".8"/>
</svg>

<!-- taskbar -->
<!-- bottom edge of app window + taskbar -->
<div class="a" style="left:0;top:737px;width:1024px;height:1px;background:#6a6a6a"></div>
<div class="a" style="left:0;top:738px;width:1024px;height:30px;background:#d4d0c8"></div>
<div class="a" style="left:0;top:738px;width:1024px;height:1px;background:#d4d0c8"></div>
<div class="a" style="left:0;top:739px;width:1024px;height:1px;background:#fff"></div>
<!-- start button -->
<div class="a" style="left:2px;top:742px;width:47px;height:22px;box-sizing:border-box;background:#d4d0c8;border:1px solid;border-color:#fff #404040 #404040 #fff;box-shadow:inset -1px -1px 0 #808080"></div>
<svg style="left:5px;top:745px" width="15" height="15" viewBox="0 0 15 15"><path d="M2 2.500q2.500-1.500 5 0l-1 4.500q-2.500-1.500-5 0z" fill="#e8442c"/><path d="M8 2.800q2.500 1.300 5-.3l-1 4.500q-2.500 1.500-5 .3z" fill="#5cb83a"/><path d="M.8 8q2.500-1.500 5 0l-1 4.500q-2.500-1.500-5 0z" fill="#3a78d8"/><path d="M6.800 8.300q2.500 1.300 5-.3l-1 4.500q-2.500 1.500-5 .3z" fill="#f4c020"/></svg>
<div class="t" style="left:22px;top:746px;font-weight:500;color:#000">开始</div>
<!-- quick launch -->
<svg style="left:56px;top:745px" width="16" height="16" viewBox="0 0 16 16"><circle cx="8" cy="8" r="7.300" fill="#fff" stroke="#888" stroke-width=".6"/><path d="M8 8L8 .7A7.300 7.300 0 0 1 15.300 8z" fill="#5cb83a"/><path d="M8 8L15.300 8A7.300 7.300 0 0 1 8 15.300z" fill="#f4b020"/><path d="M8 8L8 15.300A7.300 7.300 0 0 1 .7 8z" fill="#3a78d8"/><path d="M8 8L.7 8A7.300 7.300 0 0 1 8 .7z" fill="#e8442c"/><circle cx="8" cy="8" r="4.300" fill="#f4f4f4"/><path d="M6.500 5.500v5l4.300-2.500z" fill="#222"/></svg>
<svg style="left:80px;top:745px" width="16" height="16" viewBox="0 0 16 16"><rect x="1" y="2" width="13" height="13" rx="2.500" fill="#2a8ae0" stroke="#1560b0" stroke-width="1" transform="rotate(-6 8 8)"/><rect x="4" y="5" width="7.500" height="7.500" fill="#fdf6d8"/><path d="M5 10.500l5-4M10 6.500l-2.200.3M10 6.500l-.3 2.200" stroke="#444" stroke-width="1" fill="none"/><circle cx="14" cy="6" r="1" fill="#e05020"/></svg>
<svg style="left:103px;top:745px" width="16" height="16" viewBox="0 0 16 16"><circle cx="8" cy="8" r="7" fill="#2a8ad8" stroke="#333" stroke-width="1.400"/><circle cx="8" cy="8" r="3.800" fill="none" stroke="#fff" stroke-width="2.600" stroke-dasharray="1.700 1.300"/><circle cx="8" cy="8" r="1.600" fill="#1a6ab0"/></svg>
<div class="t" style="left:130px;top:741px;font-weight:normal;font-size:15px;line-height:14px;letter-spacing:-1px;font-family:'Liberation Sans',sans-serif">»</div>
<!-- task button (pressed) -->
<div class="a" style="left:143px;top:742px;width:160px;height:22px;box-sizing:border-box;background-color:#fff;background-image:conic-gradient(#fff 25%,#d4d0c8 0 50%,#fff 0 75%,#d4d0c8 0);background-size:2px 2px;border:1px solid;border-color:#404040 #fff #fff #404040;box-shadow:inset 1px 1px 0 #808080"></div>
<div class="a" style="left:148px;top:746px;width:16px;height:16px;box-sizing:border-box;background:#4a0d0d;border:1px solid #d01818"></div>
<div class="t" style="left:151px;top:748px;font-weight:bold;font-size:10px;line-height:12px;height:12px;color:#e83030;font-family:'Liberation Sans',sans-serif">Fl</div>
<div class="t" style="left:168px;top:747px;color:#000">未命名<i style="font-size:12px;letter-spacing:-1.200px">-1*</i></div>
<!-- tray -->
<svg style="left:986px;top:746px" width="15" height="16" viewBox="0 0 15 16"><path d="M5.500 1.500v2q1 1 2 0t2 0 2 0 1.500 0" fill="none" stroke="#222" stroke-width="1"/><rect x="1.500" y="5.500" width="12" height="9" rx="2" fill="#fff" stroke="#111" stroke-width="1.300"/><path d="M3.500 8.500h9M3.500 10.500h9M3.500 12.500h9" stroke="#111" stroke-width="1.300" stroke-dasharray="1.200 .800"/></svg>
<div class="a" style="left:1003px;top:742px;width:19px;height:23px;box-sizing:border-box;border:1px solid;border-color:#808080 #fff #fff #808080"></div>
<div class="t" style="left:1007px;top:743px;font-weight:bold;font-size:17px;line-height:20px;height:20px;font-family:'Liberation Sans',sans-serif;transform:scaleX(1.050);transform-origin:0 0">«</div>

</body>
</html>
